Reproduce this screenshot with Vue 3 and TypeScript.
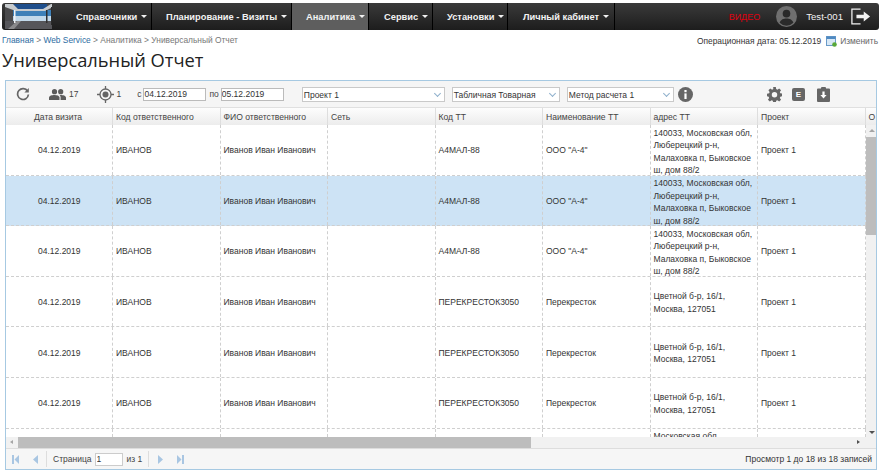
<script setup lang="ts">
const menu = [
  { label: 'Справочники', w: 100, pad: 24 },
  { label: 'Планирование - Визиты', w: 140, pad: 14 },
  { label: 'Аналитика', w: 77, pad: 14, active: true },
  { label: 'Сервис', w: 64, pad: 15 },
  { label: 'Установки', w: 75, pad: 14 },
  { label: 'Личный кабинет', w: 106, pad: 15 },
]
const cols = ['Дата визита', 'Код ответственного', 'ФИО ответственного', 'Сеть', 'Код ТТ', 'Наименование ТТ', 'адрес ТТ', 'Проект']
const addrA = ['140033, Московская обл,', 'Люберецкий р-н,', 'Малаховка п, Быковское', 'ш, дом 88/2']
const addrB = ['Цветной б-р, 16/1,', 'Москва, 127051']
interface Row { date: string; code: string; fio: string; tt: string; name: string; addr: string[]; picked?: boolean }
const a: Row = { date: '04.12.2019', code: 'ИВАНОВ', fio: 'Иванов Иван Иванович', tt: 'А4МАЛ-88', name: 'ООО "А-4"', addr: addrA }
const b: Row = { date: '04.12.2019', code: 'ИВАНОВ', fio: 'Иванов Иван Иванович', tt: 'ПЕРЕКРЕСТОК3050', name: 'Перекресток', addr: addrB }
const rows: Row[] = [{ ...a }, { ...a, picked: true }, { ...a }, { ...b }, { ...b }, { ...b }]
</script>

<template>
  <div class="page">
    <nav class="nav">
      <div class="logo">
        <svg width="50" height="25" viewBox="0 0 50 25">
          <rect width="50" height="25" fill="#4a4a4c" />
          <rect x="8" y="0" width="34" height="6" fill="#1f4f8c" />
          <rect x="8" y="6" width="38" height="6" fill="#3d80b8" />
          <rect x="8" y="12" width="38" height="5" fill="#c2d9ea" />
          <path d="M0 0H8L13 5H38L46 0H50V2L40 7H11L0 3Z" fill="#c7cbce" />
          <path d="M0 17H50V25H0Z" fill="#56565a" />
          <path d="M3 25L12 17H16L9 25Z" fill="#8a8a8c" />
          <rect x="9" y="6" width="1.500" height="13" fill="#eef2f5" />
          <rect x="41" y="6" width="1.500" height="13" fill="#2f2f2f" />
          <rect x="46" y="3" width="2" height="18" fill="#2b2b2b" />
        </svg>
      </div>
      <div class="menu">
        <div v-for="m in menu" :key="m.label" class="item" :class="{ on: m.active }" :style="{ width: m.w + 'px', paddingLeft: m.pad + 'px' }">
          {{ m.label }}<i class="caret"></i>
        </div>
      </div>
      <div class="nav-right">
        <span class="video">ВИДЕО</span>
        <svg class="avatar" width="21" height="21" viewBox="0 0 22 22">
          <circle cx="11" cy="11" r="11" fill="#6f6f6f" />
          <circle cx="11" cy="8" r="4" fill="#2a2a2a" />
          <path d="M3.800 17.500C5 13.800 8 13 11 13s6 .8 7.200 4.500A10 10 0 0 1 3.800 17.500Z" fill="#2a2a2a" />
        </svg>
        <span class="user">Test-001</span>
        <svg width="20" height="17" viewBox="0 0 22 18" fill="none">
          <path d="M10.500 1H1v16h9.500" stroke="#f2f2f2" stroke-width="1.400" />
          <path d="M6 7.200h8V3.600L21 9l-7 5.400v-3.600H6Z" fill="#f2f2f2" />
        </svg>
      </div>
    </nav>

    <div class="crumbs">
      <div class="path">
        <span class="link">Главная</span> &gt; <span class="link">Web Service</span> &gt; Аналитика &gt; Универсальный Отчет
      </div>
      <div class="opdate">
        Операционная дата: 05.12.2019
        <svg width="11" height="11" viewBox="0 0 11 11">
          <rect x="0.500" y="0.500" width="9" height="9" fill="#d8e8f6" stroke="#6a9ac8" />
          <rect x="0.500" y="0.500" width="9" height="2.500" fill="#4f8ac2" />
          <circle cx="8.500" cy="8.500" r="2.300" fill="#58a838" />
        </svg>
        <span class="change">Изменить</span>
      </div>
    </div>
    <h1 class="title">Универсальный Отчет</h1>

    <section class="grid">
      <div class="toolbar">
        <svg class="t-refresh" width="14" height="14" viewBox="0 0 14 14" fill="none">
          <path d="M11.600 4.200A5.400 5.400 0 1 0 12.400 7.500" stroke="#666" stroke-width="1.700" />
          <path d="M12.800 1v4.400H8.400Z" fill="#666" />
        </svg>
        <svg class="t-people" width="17" height="11" viewBox="0 0 17 11" fill="#5c5c5c">
          <circle cx="5.500" cy="2.700" r="2.600" />
          <circle cx="11.700" cy="2.700" r="2.600" />
          <path d="M0 11V8.600C0 6.800 3 6 5.500 6s5 .8 5 2.600V11Z" />
          <path d="M11.600 11V8.400c0-.9-.4-1.700-1-2.300.4-.1.8-.1 1.100-.1C14 6 17 6.800 17 8.600V11Z" />
        </svg>
        <span class="t-n1">17</span>
        <svg class="t-target" width="17" height="17" viewBox="0 0 17 17" fill="none">
          <circle cx="8.500" cy="8.500" r="5.500" stroke="#666" stroke-width="1.300" />
          <circle cx="8.500" cy="8.500" r="3" fill="#666" />
          <path d="M8.500 0v3M8.500 14v3M0 8.500h3M14 8.500h3" stroke="#666" stroke-width="1.300" />
        </svg>
        <span class="t-n2">1</span>
        <span class="t-c">с</span>
        <input class="date" value="04.12.2019" />
        <span class="t-po">по</span>
        <input class="date" value="05.12.2019" />
        <div class="drop s1">Проект 1<i class="chev"></i></div>
        <div class="drop s2">Табличная Товарная<i class="chev"></i></div>
        <div class="drop s3">Метод расчета 1<i class="chev"></i></div>
        <svg class="t-info" width="15" height="15" viewBox="0 0 15 15">
          <circle cx="7.500" cy="7.500" r="7.500" fill="#666" />
          <rect x="6.400" y="6.400" width="2.200" height="5.600" fill="#fff" />
          <rect x="6.400" y="3" width="2.200" height="2.200" fill="#fff" />
        </svg>
        <svg class="t-gear" width="15" height="15" viewBox="0 0 16 16">
          <path fill="#666" fill-rule="evenodd" d="M6.600 0h2.800l.4 2.200 1.300.6L13 1.500l2 2-1.300 1.900.5 1.300 2.300.4v2.800l-2.300.4-.5 1.300 1.300 1.900-2 2-1.900-1.300-1.300.5-.4 2.300H6.600l-.4-2.300-1.300-.5L3 15.500l-2-2 1.300-1.900-.5-1.300L0 9.900V7.100l2.300-.4.5-1.300L1.500 3.500l2-2 1.900 1.300 1.300-.6ZM8 5.300a2.900 2.900 0 1 0 0 5.800 2.900 2.900 0 0 0 0-5.800Z" />
        </svg>
        <span class="t-e">E</span>
        <svg class="t-clip" width="13" height="15" viewBox="0 0 13 15">
          <path fill="#666" d="M1 1.500h3V1a1 1 0 0 1 1-1h3a1 1 0 0 1 1 1v.5h3a1 1 0 0 1 1 1V14a1 1 0 0 1-1 1H1a1 1 0 0 1-1-1V2.500a1 1 0 0 1 1-1Z" />
          <path fill="#fff" d="M5.400 4.500h2.200v3.500h2L6.500 11.500 3.400 8h2Z" />
        </svg>
      </div>

      <div class="thead">
        <div v-for="(c, i) in cols" :key="c" class="th" :class="{ first: i === 0 }">{{ c }}</div>
        <div class="th last">О</div>
      </div>

      <div class="body">
        <div class="rows">
          <div v-for="(r, i) in rows" :key="i" class="tr" :class="{ picked: r.picked }">
            <div class="td first">{{ r.date }}</div>
            <div class="td">{{ r.code }}</div>
            <div class="td">{{ r.fio }}</div>
            <div class="td"></div>
            <div class="td">{{ r.tt }}</div>
            <div class="td">{{ r.name }}</div>
            <div class="td addr" :class="{ long: r.addr.length > 2 }">
              <div v-for="l in r.addr" :key="l">{{ l }}</div>
            </div>
            <div class="td">Проект 1</div>
          </div>
          <div class="tr partial">
            <div class="td first"></div>
            <div class="td"></div>
            <div class="td"></div>
            <div class="td"></div>
            <div class="td"></div>
            <div class="td"></div>
            <div class="td addr long"><div>Московская обл,</div></div>
            <div class="td"></div>
          </div>
        </div>
        <div class="vbar">
          <i class="up"></i>
          <div class="vthumb"></div>
          <i class="down"></i>
        </div>
      </div>

      <div class="hbar">
        <i class="lft"></i>
        <div class="hthumb"></div>
        <i class="rgt"></i>
      </div>

      <div class="pager">
        <div class="pleft">
          <svg class="p-first" width="7" height="9" viewBox="0 0 7 9"><rect width="2" height="9" fill="#a9c6e2" /><path d="M7 0v9L2.500 4.500Z" fill="#a9c6e2" /></svg>
          <svg class="p-prev" width="5" height="9" viewBox="0 0 5 9"><path d="M5 0v9L0 4.500Z" fill="#a9c6e2" /></svg>
          <span class="sep s-a"></span>
          <span class="p-text">Страница</span>
          <input class="p-input" value="1" />
          <span class="p-of">из 1</span>
          <span class="sep s-b"></span>
          <svg class="p-next" width="5" height="9" viewBox="0 0 5 9"><path d="M0 0v9L5 4.500Z" fill="#a9c6e2" /></svg>
          <svg class="p-last" width="7" height="9" viewBox="0 0 7 9"><rect x="5" width="2" height="9" fill="#a9c6e2" /><path d="M0 0v9L4.500 4.500Z" fill="#a9c6e2" /></svg>
        </div>
        <div class="pinfo">Просмотр 1 до 18 из 18 записей</div>
      </div>
    </section>
  </div>
</template>

<style scoped>
.page {
  width: 881px;
  height: 472px;
  overflow: hidden;
  background: #fff;
  font-family: "Liberation Sans", Arial, sans-serif;
  font-size: 9px;
  color: #333;
  padding-top: 3px;
  box-sizing: border-box;
}
.nav {
  margin: 0 2px;
  height: 27px;
  display: flex;
  align-items: stretch;
  background: linear-gradient(#3a3a3a, #1d1d1d);
  border-radius: 3px;
}
.logo { width: 50px; flex: none; padding-top: 1px; overflow: hidden; }
.logo svg { display: block; margin-left: 3px; }
.menu { display: flex; border-right: 1px solid #000; }
.item {
  display: flex;
  align-items: center;
  gap: 3px;
  box-sizing: border-box;
  color: #f2f2f2;
  font-weight: 700;
  font-size: 9.300px;
  border-right: 1px solid #000;
  white-space: nowrap;
}
.item:last-child { border-right: 0; }
.item.on { background: #5e5e5e; }
.caret {
  width: 0; height: 0;
  border-left: 3px solid transparent;
  border-right: 3px solid transparent;
  border-top: 3px solid #f2f2f2;
  margin-left: 1px;
}
.nav-right { margin-left: auto; display: flex; align-items: center; padding-right: 8px; }
.video { color: #e0000f; font-size: 9px; margin-right: 16px; }
.avatar { margin-right: 9px; }
.user { color: #f2f2f2; font-size: 9.600px; margin-right: 8px; }

.crumbs {
  display: flex;
  justify-content: space-between;
  height: 21px;
  padding: 5px 3px 0 2px;
  box-sizing: border-box;
}
.path { font-size: 8.400px; color: #777; line-height: 11px; }
.link { color: #2d6ca2; }
.opdate { display: flex; align-items: flex-start; font-size: 8.400px; color: #333; line-height: 12px; }
.opdate svg { margin: 1px 0 0 5px; }
.change { color: #666; margin-left: 3px; font-size: 8.400px; }
.title {
  margin: -4px 0 0 2px;
  font: 400 18.300px/26px "Open Sans", sans-serif;
  color: #222;
  height: 33px;
}

.grid {
  margin: 0 4px 0 5px;
  height: 390px;
  box-sizing: border-box;
  border: 1px solid #a6c9e2;
  display: flex;
  flex-direction: column;
  overflow: hidden;
}
.toolbar {
  height: 26px;
  flex: none;
  background: #f5f5f5;
  display: flex;
  align-items: center;
  font-size: 8.500px;
  color: #444;
}
.t-refresh { margin-left: 10px; }
.t-people { margin-left: 19px; }
.t-n1 { margin-left: 3px; }
.t-target { margin-left: 19px; }
.t-n2 { margin-left: 2px; }
.t-c { margin-left: 16px; margin-right: 2px; }
.t-po { margin: 0 2px 0 3px; }
.date {
  width: 63px;
  height: 13px;
  box-sizing: border-box;
  border: 1px solid #bbb;
  padding: 0;
  font: 8.500px "Liberation Sans", sans-serif;
  color: #333;
  background: #fff;
}
.drop {
  position: relative;
  height: 15px;
  line-height: 14px;
  box-sizing: border-box;
  border: 1px solid #c9c9c9;
  background: #fff;
  padding-left: 1px;
  color: #333;
  font-size: 8.500px;
}
.s1 { width: 143px; margin-left: 18px; }
.s2 { width: 108px; margin-left: 7px; }
.s3 { width: 107px; margin-left: 7px; }
.chev {
  position: absolute;
  right: 4px;
  top: 3px;
  width: 4px;
  height: 4px;
  border-right: 1px solid #8fb0cc;
  border-bottom: 1px solid #8fb0cc;
  transform: rotate(45deg);
}
.t-info { margin-left: 4px; }
.t-gear { margin-left: 74px; }
.t-e {
  margin-left: 10px;
  width: 13px;
  height: 13px;
  background: #666;
  color: #fff;
  font-size: 8px;
  font-weight: 700;
  text-align: center;
  line-height: 13px;
  border-radius: 2px;
}
.t-clip { margin-left: 12px; }

.thead {
  height: 18px;
  flex: none;
  display: flex;
  background: linear-gradient(#fdfdfd, #ececec);
  border-top: 1px solid #e0e0e0;
  box-sizing: border-box;
  color: #444;
  font-size: 8.600px;
  line-height: 19px;
  width: 900px;
}
.th {
  width: 107.500px;
  flex: none;
  box-sizing: border-box;
  padding-left: 3px;
  border-right: 1px solid #dedede;
}
.th.first { width: 107px; padding-left: 28px; }
.th.last { border: 0; width: 30px; }

.body { flex: 1; min-height: 0; display: flex; overflow: hidden; position: relative; }
.rows { flex: none; width: 860px; overflow: hidden; }
.tr {
  display: flex;
  height: 50.600px;
  box-sizing: border-box;
  border-bottom: 1px dashed #cfcfcf;
}
.tr.picked { background: #cde3f5; }
.tr.partial { height: 8px; border-bottom: 0; overflow: hidden; }
.td {
  width: 107.500px;
  flex: none;
  box-sizing: border-box;
  display: flex;
  align-items: center;
  padding: 1px 0 0 3px;
  border-right: 1px dashed #cfcfcf;
  font-size: 8.500px;
  color: #333;
  white-space: nowrap;
}
.td.first { width: 107px; padding-left: 32px; }
.addr { flex-direction: column; justify-content: center; align-items: flex-start; line-height: 12.600px; padding-top: 2px; }
.addr.long { justify-content: flex-start; padding-top: 1.500px; }
.vbar {
  flex: none;
  width: 11px;
  background: #f1f1f1;
  position: relative;
}
.vthumb { position: absolute; left: 0; right: 0; top: 12px; height: 98px; background: #bdbdbd; }
.up, .down { position: absolute; left: 3px; width: 0; height: 0; border-left: 3px solid transparent; border-right: 3px solid transparent; }
.up { top: 4px; border-bottom: 3px solid #a5a5a5; }
.down { bottom: 3px; border-top: 3px solid #505050; }

.hbar { height: 11px; flex: none; background: #f1f1f1; position: relative; }
.hthumb { position: absolute; left: 12px; top: 0; bottom: 0; width: 513px; background: #bdbdbd; }
.lft, .rgt { position: absolute; top: 3px; width: 0; height: 0; border-top: 2.500px solid transparent; border-bottom: 2.500px solid transparent; }
.lft { left: 4px; border-right: 3px solid #a5a5a5; }
.rgt { right: 16px; border-left: 3px solid #505050; }

.pager {
  flex: none;
  height: 21px;
  display: flex;
  justify-content: space-between;
  align-items: center;
  background: #f6f6f6;
  border-top: 1px solid #ddd;
  box-sizing: border-box;
  font-size: 8.500px;
  line-height: 12px;
  color: #444;
}
.pleft { display: flex; align-items: center; height: 100%; }
.p-first { margin-left: 6px; }
.p-prev { margin-left: 14px; }
.sep { width: 1px; height: 16px; background: #ddd; }
.s-a { margin: 0 6px 0 8px; }
.s-b { margin: 0 9px 0 6px; }
.p-input {
  width: 28px;
  height: 13px;
  box-sizing: border-box;
  border: 1px solid #ccc;
  padding: 0 1px;
  margin: 0 4px 0 3px;
  font: 8.500px "Liberation Sans", sans-serif;
  color: #333;
}
.p-last { margin-left: 14px; }
.pinfo { padding-right: 4px; color: #333; }
</style>
